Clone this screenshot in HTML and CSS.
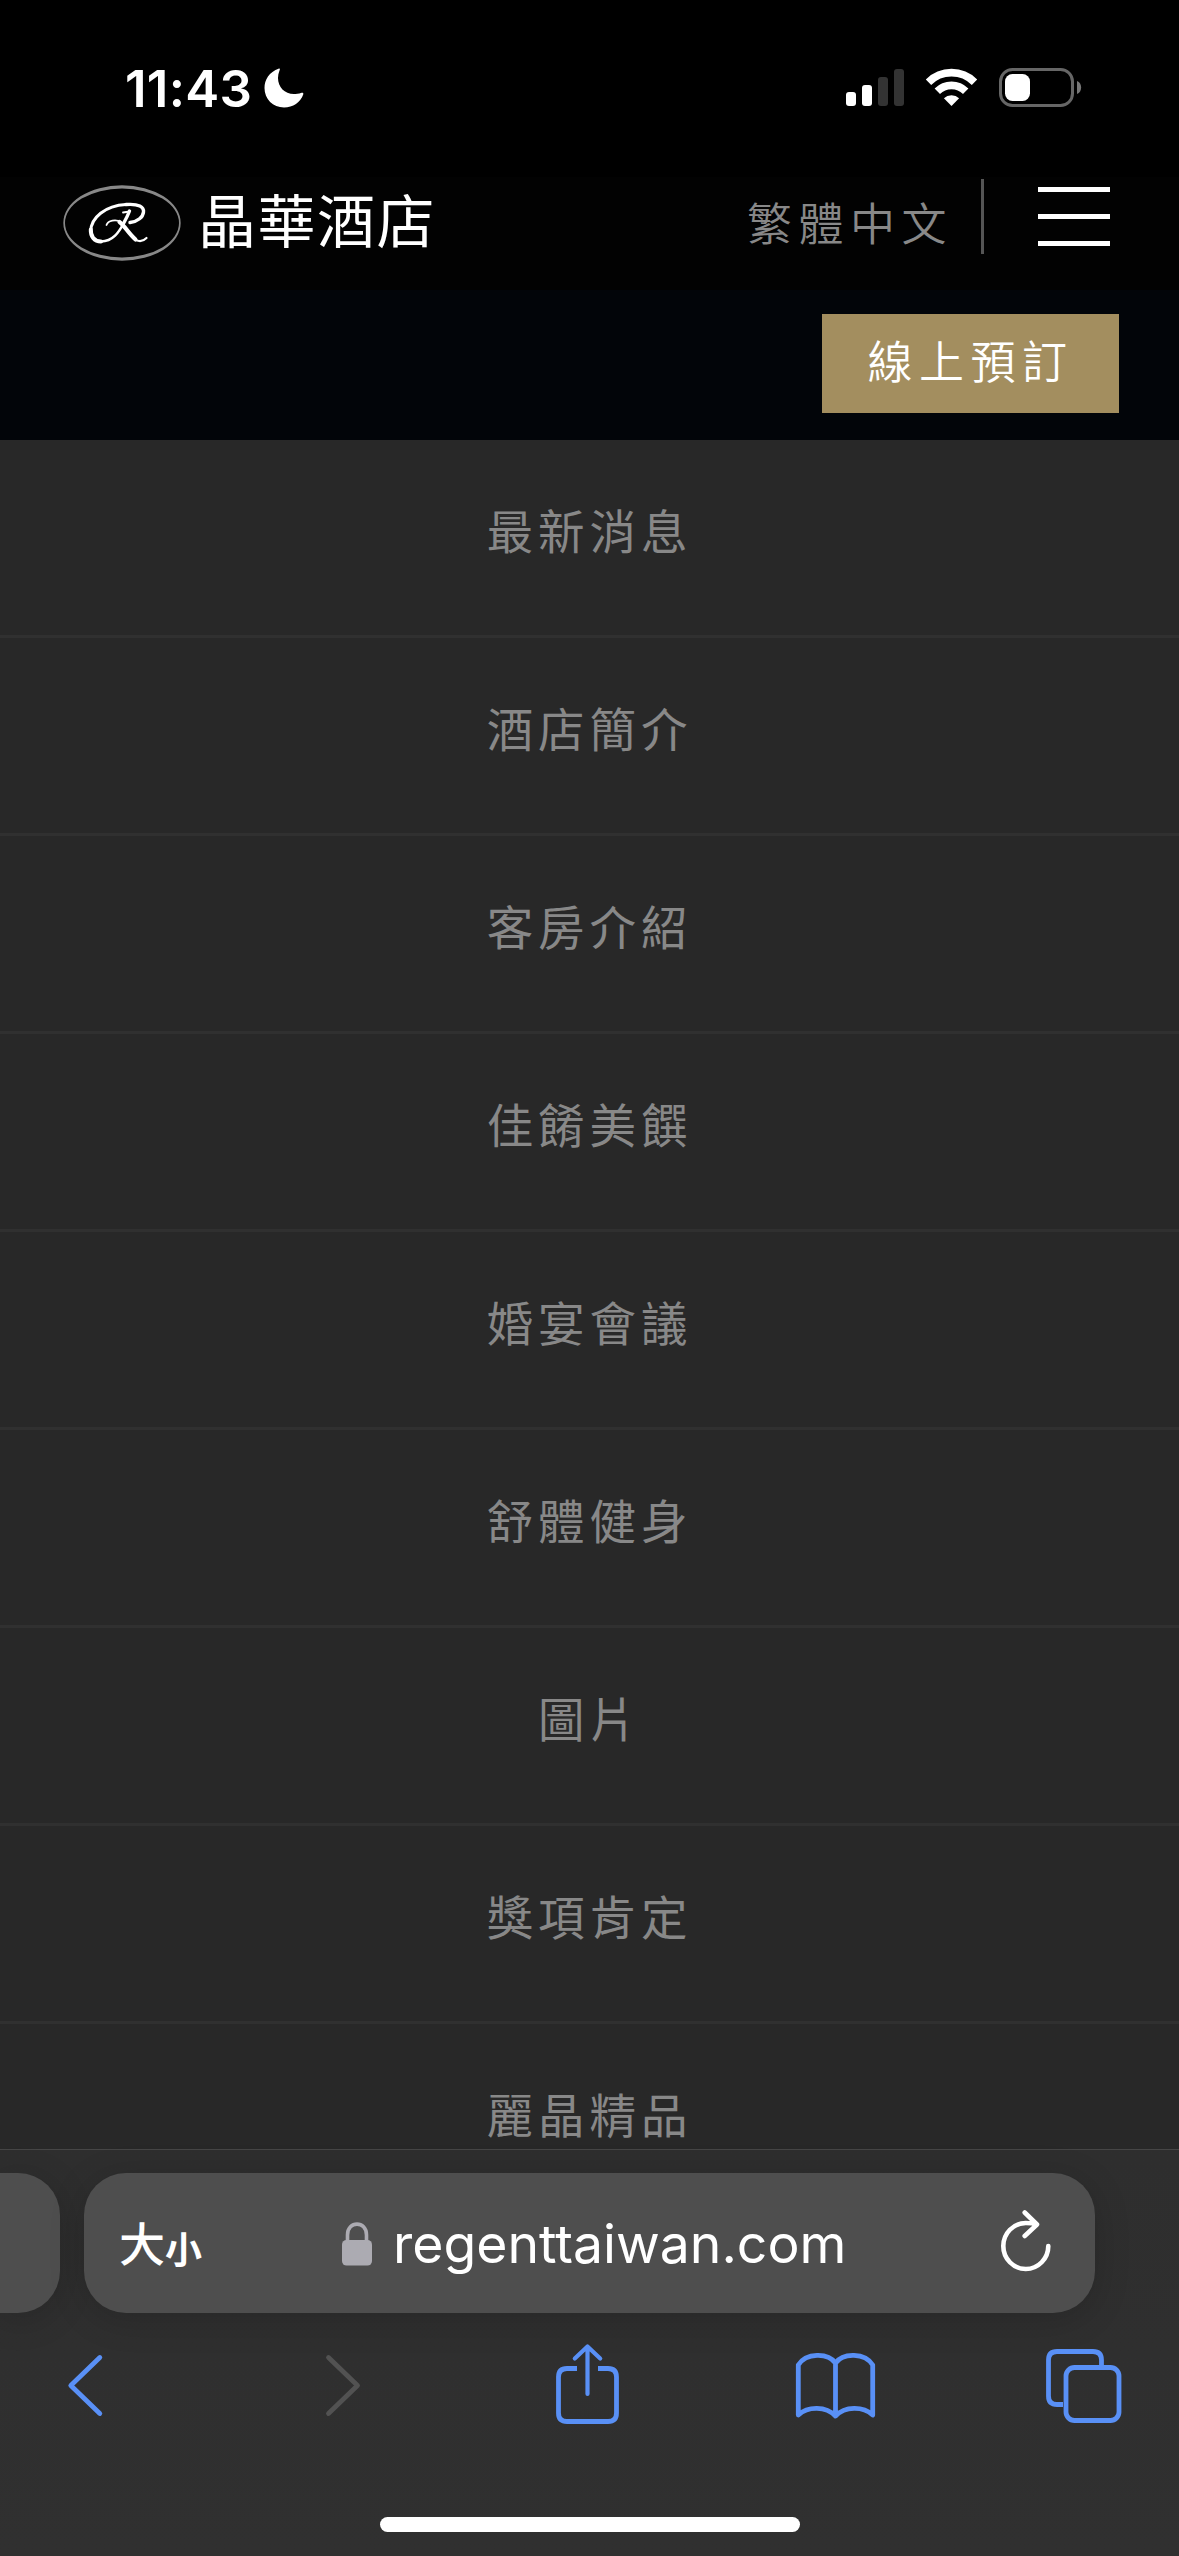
FILE: index.html
```html
<!DOCTYPE html>
<html lang="zh-Hant">
<head>
<meta charset="utf-8">
<title>晶華酒店</title>
<link rel="stylesheet" href="styles.css">
</head>
<body>
<div class="screen">
  <div class="status">
    <span class="time">11:43</span>
    <svg class="moon" width="40" height="40" viewBox="0 0 40 40"><path d="M15 0.5C5 4 .5 12 .5 20 .5 31 9 39.5 20 39.5c9 0 16.500-5 19.300-13.200.4-1.300-.6-1.900-1.700-1.500-3 1.100-5.600 1.200-7.600 1.200-9.500 0-16-7-16-16 0-2.500.5-5 1.500-7.500C16.200 1 16 .2 15 .5Z" fill="#fff"/></svg>
    <svg class="signals" width="236" height="40" viewBox="0 0 236 40">
      <g fill="#fff"><rect y="24" width="10" height="14" rx="3"/><rect x="16" y="17" width="10" height="21" rx="3"/></g>
      <g fill="#333"><rect x="32" y="9" width="10" height="29" rx="3"/><rect x="48" y="1" width="10" height="37" rx="3"/></g>
      <g fill="none" stroke="#fff" stroke-width="7.600"><path d="M82.500 14.200a32.500 32.500 0 0 1 46 0"/><path d="M91.300 23.300a20 20 0 0 1 28.400 0"/></g>
      <path d="M105.500 38l-7.600-7.700a11 11 0 0 1 15.200 0Z" fill="#fff"/>
      <rect x="154.500" y="1.500" width="72" height="36" rx="12" fill="none" stroke="#666" stroke-width="3"/>
      <rect x="159" y="6" width="25" height="27" rx="7.500" fill="#fff"/>
      <path d="M231 13c5.500 2 5.500 11 0 13Z" fill="#777"/>
    </svg>
  </div>
  <header class="header">
    <svg class="logo" width="118" height="76" viewBox="0 0 118 76">
      <path fill="#888" fill-rule="evenodd" d="M59 .3A58.700 37.700 0 0 1 59 75.700 58.700 37.700 0 0 1 59 .3ZM59 3.500A57 34.500 0 0 0 59 72.500 57 34.500 0 0 0 59 3.500Z"/>
      <g fill="none" stroke="#fff" stroke-linecap="round" stroke-linejoin="round">
        <path stroke-width="4" d="M38 56.500C31 56.500 27.500 51 27.800 44.500"/>
        <path stroke-width="3" d="M27.800 46C28 33 42 20.500 63 19.500"/>
        <path stroke-width="3.400" d="M63 19.500C76 18.500 81 22 80.500 27 80 32 75 36.500 67 37.500"/>
        <path stroke-width="2.600" d="M38 56.500C50 56.500 56 47 60.500 38.500"/>
        <path stroke-width="3.400" d="M60.500 38.500C63 34 65 30 66.500 26"/>
        <path stroke-width="1.800" d="M60 27.500L66.500 26.500M43.500 40C45 35.500 53 34 57.500 37"/>
        <path stroke-width="4.200" d="M56.500 37C61 40 66 49 72.500 54.500"/>
        <path stroke-width="2.200" d="M71.500 54C76 57.500 80.500 56 83.500 53"/>
      </g>
    </svg>
    <span class="brand">晶華酒店</span>
    <span class="lang">繁體中文</span>
    <span class="divider"></span>
    <div class="burger"><i></i><i></i><i></i></div>
  </header>
  <div class="banner"><a class="book">線上預訂</a></div>
  <nav class="menu">
    <a>最新消息</a>
    <a>酒店簡介</a>
    <a>客房介紹</a>
    <a>佳餚美饌</a>
    <a>婚宴會議</a>
    <a>舒體健身</a>
    <a>圖片</a>
    <a>獎項肯定</a>
    <a>麗晶精品</a>
  </nav>
  <footer class="toolbar">
    <div class="tabs">
      <div class="prev"></div>
      <div class="url">
        <div class="textsize"><span class="big">大</span><span class="small">小</span></div>
        <svg class="lock" width="30" height="44" viewBox="0 0 30 44"><rect y="18" width="30" height="25.500" rx="4.500" fill="#acabb2"/><path d="M5.500 20V13C5.500-1.500 24.500-1.500 24.500 13v7" fill="none" stroke="#acabb2" stroke-width="3.600"/></svg>
        <span class="host">regenttaiwan.com</span>
        <svg class="reload" width="52" height="64" viewBox="0 0 52 64"><path d="M48.300 38A22.500 23 0 1 1 25.800 15C30 15 34 15.500 36.500 16.500M24.700 4.500L37 16.500 24.700 28" fill="none" stroke="#fff" stroke-width="4.600" stroke-linecap="round" stroke-linejoin="round"/></svg>
      </div>
    </div>
    <svg class="actions" width="1060" height="84" viewBox="64 2341 1060 84" fill="none" stroke="#5990f6" stroke-width="4.800" stroke-linecap="round" stroke-linejoin="round">
      <path d="M99.800 2357.500L70.800 2385.500 99.800 2413.500"/>
      <path d="M328.500 2357.500L357.500 2385.500 328.500 2413.500" stroke="#525252"/>
      <path d="M577 2368.500H567Q558.500 2368.500 558.500 2377V2413Q558.500 2421.500 567 2421.500H608Q616.500 2421.500 616.500 2413V2377Q616.500 2368.500 608 2368.500H598" stroke-linecap="butt"/>
      <path d="M587.500 2394V2347M574.800 2358.500L587.500 2346.500 600.200 2358.500" stroke-width="4.200"/>
      <path d="M835.500 2416V2363C828 2352.500 806 2352.500 798.300 2365V2415C808 2406 826 2406 835.500 2416C845 2406 863 2406 872.700 2415V2365C865 2352.500 843 2352.500 835.500 2363"/>
      <path d="M1063 2404.500H1057Q1048.500 2404.500 1048.500 2396V2360Q1048.500 2351.500 1057 2351.500H1093Q1101.500 2351.500 1101.500 2360V2366" stroke-linecap="butt"/>
      <rect x="1066" y="2367.500" width="53" height="53" rx="8.500"/>
    </svg>
    <div class="home"></div>
  </footer>
</div>
</body>
</html>
```
FILE: styles.css
```css
* { box-sizing: border-box; }
body { margin: 0; background: #282828; }
.screen {
  width: 1179px;
  height: 2556px;
  overflow: hidden;
  display: flex;
  flex-direction: column;
  font-family: "Noto Sans CJK TC", sans-serif;
  font-weight: 350;
}
svg { display: block; flex: none; }
.status {
  flex: none;
  height: 177px;
  padding: 68px 97px 0 125px;
  display: flex;
  align-items: flex-start;
  background: #000;
}
.time {
  width: 139px;
  font: 600 51px/41px Inter, sans-serif;
  letter-spacing: 0.3px;
  color: #fff;
}
.signals { margin-left: auto; }
.header {
  flex: none;
  height: 113px;
  padding: 0 69px 0 63px;
  display: flex;
  align-items: flex-start;
  background: #020202;
}
.logo { margin-top: 8px; }
.brand {
  margin: 6px 0 0 17px;
  font-size: 58px;
  line-height: 70px;
  font-weight: 400;
  letter-spacing: 1.5px;
  color: #fff;
}
.lang, .book, .menu a { font-size: 45px; letter-spacing: 6.500px; white-space: nowrap; }
.lang { margin: 14px 0 0 auto; line-height: 62px; color: #888; }
.divider { width: 3px; height: 75px; margin: 2px 54px 0 28px; background: #555; }
.burger { width: 72px; padding-top: 10px; display: grid; gap: 22px; }
.burger i { height: 5px; background: #fff; }
.banner {
  flex: none;
  height: 150px;
  padding: 24px 60px 0;
  display: flex;
  justify-content: flex-end;
  background: #020509;
}
.book {
  width: 297px;
  height: 99px;
  text-align: center;
  line-height: 91px;
  background: #a38e5f;
  color: #fff;
}
.menu { flex: none; height: 1709px; overflow: hidden; background: #282828; }
.menu a {
  display: block;
  height: 198px;
  border-bottom: 3px solid #303030;
  text-align: center;
  font-size: 46.500px;
  font-weight: 400;
  letter-spacing: 4.900px;
  line-height: 177px;
  color: #888;
}
.toolbar {
  flex: 1;
  display: flex;
  flex-direction: column;
  border-top: 1px solid #464646;
  background: linear-gradient(#2e2e2e, #303030);
}
.tabs { display: flex; gap: 24px; padding-top: 23px; }
.prev, .url { height: 140px; background: #4e4e4e; box-shadow: 0 6px 36px rgba(0,0,0,.16); }
.prev { width: 60px; border-radius: 0 42px 42px 0; }
.url {
  width: 1011px;
  padding-left: 35px;
  border-radius: 42px;
  display: flex;
  align-items: flex-start;
  color: #fff;
}
.textsize { width: 223px; display: flex; align-items: flex-start; }
.big { margin-top: 35px; font-size: 46px; line-height: 66px; font-weight: 500; }
.small { margin-top: 50px; font-size: 37px; line-height: 50px; font-weight: 600; }
.lock { margin-top: 49px; }
.host { margin: 41px 0 0 21px; font: 400 53.500px/60px Inter, sans-serif; }
.reload { margin: 35px 43px 0 auto; }
.actions { margin: 28px 0 0 64px; }
.home { width: 420px; height: 15px; margin: 92px 0 0 380px; border-radius: 8px; background: #fff; }
```
